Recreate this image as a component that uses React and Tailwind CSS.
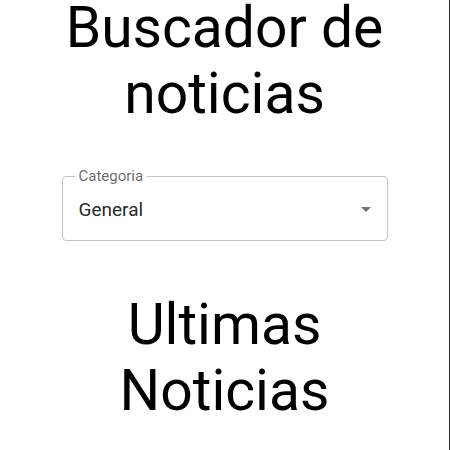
export default function App() {
  return (
    <div
      className="w-[450px] h-[450px] overflow-hidden bg-white border-r border-[#2e2e2e] flex flex-col items-center text-black"
      style={{ fontFamily: "Roboto, 'Noto Sans', sans-serif" }}
    >
      <h1 className="mt-[-5px] text-center text-[57px] leading-[66px] font-normal">
        Buscador de
        <br />
        noticias
      </h1>

      <div className="relative mt-[49px] w-[326px] h-[65px] rounded border border-[#c4c4c4] flex items-center pl-[16px] pr-[9px]">
        <span className="absolute left-[12px] top-[-10px] bg-white px-[4px] text-[15px] leading-[18px] text-black/60">
          Categoria
        </span>
        <span className="flex-1 pt-[3px] text-[19px] text-black/[0.87]">General</span>
        <svg width="24" height="24" viewBox="0 0 24 24" className="text-black/[0.54]">
          <path d="M7 10l5 5 5-5z" fill="currentColor" />
        </svg>
      </div>

      <h2 className="mt-[51px] text-center text-[57px] leading-[66px] font-normal">
        Ultimas
        <br />
        Noticias
      </h2>
    </div>
  );
}
